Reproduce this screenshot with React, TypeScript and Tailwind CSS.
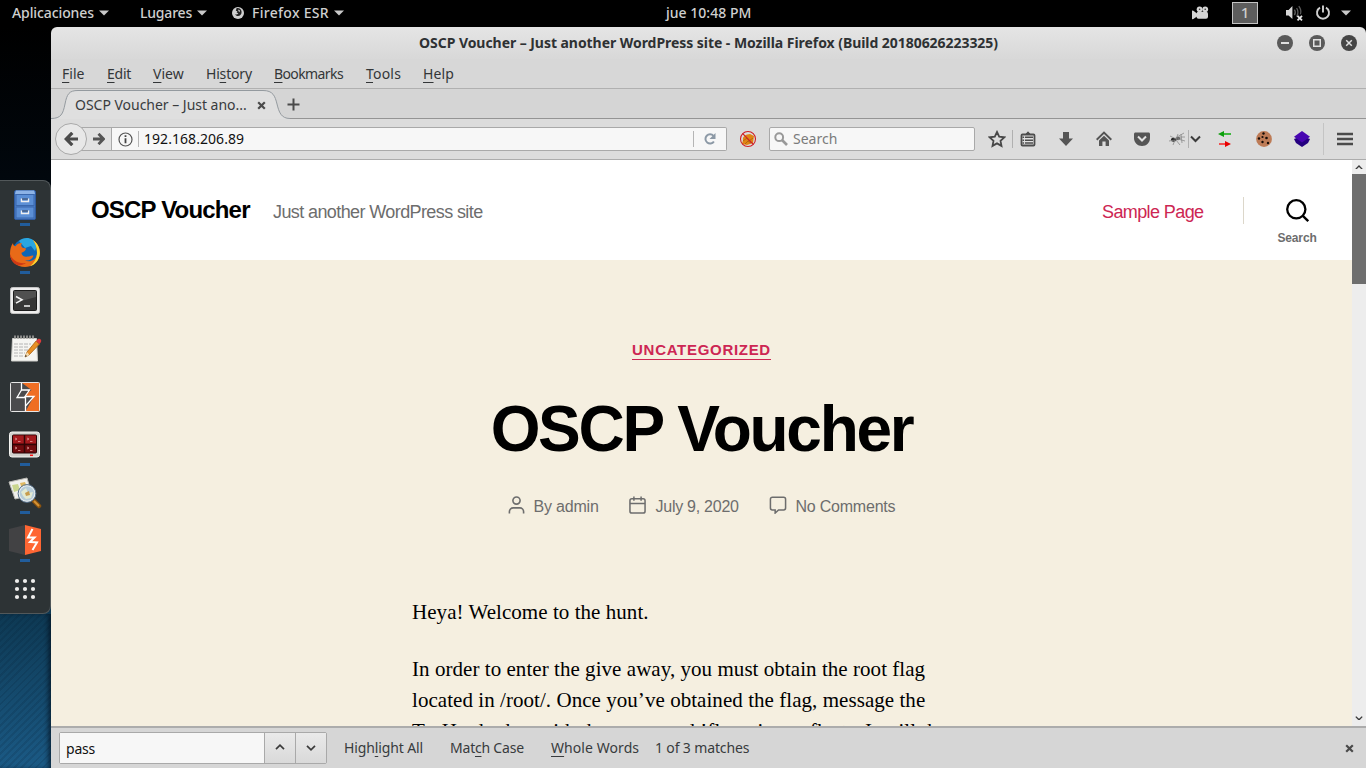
import type { ReactNode } from "react";

const Caret = ({ className = "" }: { className?: string }) => (
  <svg className={`shrink-0 ${className}`} width="10" height="6" viewBox="0 0 10 6"><path d="M0 .5h10L5 5.5z" fill="#c9c9c9" /></svg>
);

function TopBar() {
  return (
    <div className="flex h-[27px] shrink-0 bg-black pb-px text-[14px] font-medium text-[#cfcfcf]">
      <div className="flex w-[128px] items-center pl-3">
        <span className="pb-[2px] tracking-[-0.1px]">Aplicaciones</span><Caret className="ml-[5px]" />
      </div>
      <div className="flex w-[104px] items-center pl-3">
        <span className="pb-[2px] tracking-[-0.2px]">Lugares</span><Caret className="ml-[5px]" />
      </div>
      <div className="flex w-[434px] items-center">
        <svg width="12" height="12" viewBox="0 0 12 12">
          <circle cx="6" cy="6" r="6" fill="#cfcfcf" />
          <path d="M4.500 1.200C7 .6 9.400 2 9.600 4.800 9.800 7.500 8 9 6 9 4.600 9 3.600 8.200 3.200 7.200l1.800.3 1.400-1.200-1.800-.7.8-1.300-1.600-.6z" fill="#222" />
          <path d="M6.200 2.400l1.800 1-.4 1.800L6.400 4z" fill="#cfcfcf" />
        </svg>
        <span className="ml-[8px] pb-[2px] tracking-[0.3px]">Firefox ESR</span><Caret className="ml-[5px]" />
      </div>
      <div className="flex w-[526px] items-center pb-[2px] tracking-[0.02px]">jue 10:48 PM</div>
      <div className="flex flex-1 items-center">
        <svg width="17" height="14" viewBox="0 0 17 14" fill="#d6d6d6">
          <circle cx="7.6" cy="3.3" r="2.9" /><circle cx="13.2" cy="3.3" r="2.9" />
          <rect x="4.500" y="5.8" width="11.500" height="7" rx="2" /><path d="M0 4.6l1.4.2L5 7.6v3L1.4 13 0 13.2z" />
          <circle cx="7.6" cy="3.3" r=".8" fill="#333" /><circle cx="13.2" cy="3.3" r=".8" fill="#333" />
        </svg>
        <div className="ml-[23px] flex h-[22px] w-[26px] items-center justify-center border border-[#c4c4c4] bg-[#5d5d5d] pb-[2px] text-[15px] text-[#cfcfcf]">1</div>
        <svg className="ml-[28px]" width="18" height="16" viewBox="0 0 18 16">
          <path d="M0 5h2.6L6.4 1v13L2.6 10.6H0z" fill="#d6d6d6" />
          <path d="M8.4 4.6c1 1.4 1 4 0 5.6M10.6 3c1.6 2.4 1.6 6 0 8.8M12.8 1.2c2.2 3 2.4 6 1.6 8" stroke="#5a5a5a" strokeWidth="1.3" fill="none" />
          <path d="M11.500 10.900l4.500 4.500M16 10.900l-4.500 4.500" stroke="#e6e6e6" strokeWidth="1.8" />
        </svg>
        <svg className="ml-[11px]" width="16" height="16" viewBox="0 0 16 16" fill="none" stroke="#cfcfcf" strokeWidth="1.9">
          <path d="M5 2.6a6 6 0 1 0 6 0M8 .6v7" />
        </svg>
        <Caret className="ml-[10px]" />
      </div>
    </div>
  );
}

const dock: { icon: ReactNode; on: boolean }[] = [
  { on: true, icon: (
    <>
      <rect x="6.5" y="2.500" width="21" height="29" rx="1.5" fill="#4a7fc9" stroke="#2f5a9e" />
      <path d="M8 2.500h18l1 3.500H7z" fill="#8db3e6" />
      <rect x="8" y="6.5" width="18" height="11" fill="#5b8fd6" stroke="#3a67ac" /><rect x="8" y="19" width="18" height="11" fill="#5b8fd6" stroke="#3a67ac" />
      <path d="M13.500 10.500v3h7v-3M13.500 22.500v3h7v-3" fill="none" stroke="#efefef" strokeWidth="1.4" /><path d="M14 11h6M14 23h6" stroke="#39455a" />
    </>) },
  { on: true, icon: (
    <>
      <circle cx="18" cy="16" r="13.500" fill="#0d66b6" /><path d="M11 5c5-5 15-4 18 4l-2 6-4-5-6 2z" fill="#2aa6e0" />
      <path d="M25 4c5 4 8 9 6.500 16C29.500 27 23.500 31 17 31 8.500 31 2 25 2 17.500 2 13 3 10 5 7c0 2 1 3.200 2.500 3.200C9 8 11 7 14 7c-1.200 1.700-1.200 3.500.8 4.800l3.200.8c0 2-2 3.200-4.500 4.200 0 2.700 3 4.700 6 3.700 3 0 4-1.800 6-.8-1.200 3.500-5 5.500-9 4.500 5 2.800 12.500 0 12.500-7.500C29 11 27.500 7.500 25 4z" fill="#e86a18" />
      <path d="M25 4c5.500 4 8 10 6.300 16.500-1.300 5-5 8.500-9.300 9.800 4.700-4 7-8.300 7-13.600 0-5.200-1.500-9-4-12.700z" fill="#fbd52f" />
      <path d="M2 18c2 6 8 10 16 9-3 2-7 3-9 2-4-2-7-6-7-11z" fill="#cf3a15" />
    </>) },
  { on: false, icon: (
    <>
      <rect x="2.5" y="3.500" width="29" height="26" rx="2" fill="#ededed" stroke="#c4c4c4" />
      <rect x="5.500" y="6.500" width="23" height="20" rx="1" fill="#363636" stroke="#1c1c1c" /><path d="M6 7h22v6L6 19z" fill="#505050" />
      <path d="M8 12.500l6 3.300-6 3.300M16 22h6" fill="none" stroke="#f5f5f5" strokeWidth="1.500" />
    </>) },
  { on: false, icon: (
    <>
      <path d="M4.500 6.500h24l1 22.500h-26z" fill="#f5f5f2" stroke="#cfcfcb" />
      <path d="M7 7V3.500m3 3.500V3.500m3 3.500V3.500m3 3.500V3.500m3 3.500V3.500m3 3.500V3.500m3 3.500V3.500" stroke="#a8a8a4" strokeWidth="1.500" />
      <path d="M6 12h17M6 15h14M6 18h15M6 21h11M6 24h9" stroke="#b4b4b4" strokeWidth="1" strokeDasharray="4 1" />
      <path d="M17 25l2-5L28 9l3.500 3-10.500 11z" fill="#e88f25" stroke="#a75f11" strokeWidth=".8" />
      <path d="M28 9l2-2c2-1 4 1 3 3l-1.500 2z" fill="#dd3b3b" /><path d="M17 25l2-5 2.500 3z" fill="#f4dcb0" /><path d="M17 25l.6-2 1.400 1z" fill="#222" />
    </>) },
  { on: false, icon: (
    <>
      <rect x="2.500" y="2.500" width="29" height="29" fill="#4b4b4d" />
      <path d="M13.500 2.500h18v29h-14l1-7 7-8-8.500-1 3-6-7-.5z" fill="#ef6e23" />
      <path d="M13.500 2.500V9.500l7 .5-11.500 8h9.500L17.500 31.500 26 16H15.500l8-6" fill="#4b4b4d" />
      <path d="M13.500 3v7h8L17 16.500h9L17.500 26v5.500" fill="none" stroke="#fff" strokeWidth="1.300" />
      <path d="M13.500 10L9 17.500h8.500V26" fill="none" stroke="#fff" strokeWidth="1.300" />
      <rect x="2.500" y="2.500" width="29" height="29" rx="1" fill="none" stroke="#e6e6e6" />
    </>) },
  { on: true, icon: (
    <>
      <rect x="1.500" y="4" width="30" height="25" rx="2.500" fill="#d2d2ce" stroke="#f4f4f1" /><rect x="4.500" y="7" width="24" height="18" rx="1" fill="#700b0e" stroke="#280305" />
      <path d="M5 7.500h23v8H5z" fill="#a51a1e" /><path d="M16.500 7v18M5 16.500h23" stroke="#310506" strokeWidth="1.500" />
      <path d="M7 10l2 1-2 1m3 1.500h2.500M19 10l2 1-2 1m3 1.500h2.500M7 19l2 1-2 1m3 1.500h2.500M19 19l2 1-2 1m3 1.500h2.500" stroke="#e59a9a" strokeWidth=".8" fill="none" />
      <path d="M22 27.300h3" stroke="#f11" strokeWidth="1.500" />
    </>) },
  { on: true, icon: (
    <>
      <path d="M1 6l18-4 5 17-17 4z" fill="#f0f0ec" stroke="#b9b9b4" /><path d="M4 9l6-1 2 6-6 2z" fill="#c9d68f" /><path d="M12 7l5-1 2 5-5 2z" fill="#dfb862" />
      <path d="M26 25l5 5" stroke="#8a5310" strokeWidth="4.500" strokeLinecap="round" /><path d="M26 25l5 5" stroke="#d59334" strokeWidth="2" />
      <circle cx="19" cy="17.500" r="8" fill="#b6ccd9" stroke="#e8edf0" strokeWidth="1.500" /><circle cx="19" cy="17.500" r="8.900" fill="none" stroke="#55708a" />
      <path d="M13 16l5-4 2 5 5-1-2 6-5 1-3-3z" fill="#e3ead2" /><path d="M17 17l4-2 1 4-4 1z" fill="#c79c4d" />
    </>) },
  { on: true, icon: (
    <>
      <path d="M1 5l16-4v30L1 27z" fill="#424244" /><path d="M17 1l16 4v22l-16 4z" fill="#ff6633" />
      <path d="M24.500 5l-4.500 8.500h6.500L22 18l7 .5L24.500 26" fill="none" stroke="#fff" strokeWidth="2" />
    </>) },
  { on: false, icon: (
    <g fill="#eeeeec">
      {[9, 17, 25].map((y) => [9, 17, 25].map((x) => <circle key={`${x}-${y}`} cx={x} cy={y} r="2.100" />))}
    </g>) },
];

function Dock() {
  return (
    <aside className="flex w-[51px] shrink-0 flex-col bg-[linear-gradient(180deg,#000_0%,#01070d_20%,#06243a_70%,#0e3a55_80%,#1b5a85_100%)]">
      <div className="mt-[153px] flex h-[434px] w-[51px] flex-col rounded-r-[8px] border border-l-0 border-[#52585a] bg-[#2d3335]">
        {dock.map((d, i) => (
          <div key={i} className="flex h-12 shrink-0 flex-col items-center pt-[7px]">
            <svg width="34" height="34" viewBox="0 0 34 34">{d.icon}</svg>
            {d.on && <div className="mt-px h-[3px] w-[10px] bg-[#215d9c]" />}
          </div>
        ))}
      </div>
      <div className="w-full flex-1 bg-[repeating-linear-gradient(135deg,transparent_0_3px,rgba(0,20,40,0.13)_3px_5px)] shadow-[inset_-4px_0_4px_-1px_rgba(0,10,20,0.55)]" />
    </aside>
  );
}

function TitleBar() {
  return (
    <div className="grid h-8 shrink-0 grid-cols-[1fr_auto_1fr] items-center bg-linear-to-b from-[#e5e5e5] to-[#d8d8d8]">
      <span />
      <span className="pb-[2px] text-[14px] font-bold tracking-[-0.05px] text-[#2e3133]">OSCP Voucher – Just another WordPress site - Mozilla Firefox (Build 20180626223325)</span>
      <div className="flex justify-end gap-4 pr-[9px]">
        <svg width="16" height="16" viewBox="0 0 16 16"><circle cx="8" cy="8" r="8" fill="#5a5a5a" /><path d="M4 8h8" stroke="#e0e0e0" strokeWidth="2" /></svg>
        <svg width="16" height="16" viewBox="0 0 16 16"><circle cx="8" cy="8" r="8" fill="#5a5a5a" /><rect x="4.750" y="4.750" width="6.500" height="6.500" fill="none" stroke="#e0e0e0" strokeWidth="1.500" /></svg>
        <svg width="16" height="16" viewBox="0 0 16 16"><circle cx="8" cy="8" r="8" fill="#464646" /><path d="M5.200 5.200l5.600 5.600M10.800 5.200l-5.600 5.600" stroke="#e0e0e0" strokeWidth="1.500" /></svg>
      </div>
    </div>
  );
}

const U = ({ children }: { children: ReactNode }) => <span className="underline underline-offset-[3px]">{children}</span>;

function MenuBar() {
  return (
    <div className="flex h-[30px] shrink-0 items-center border-b border-[#b0b0b0] bg-[#d7d7d7] pl-[11px] text-[14px] text-[#333638]">
      <span className="w-[45px]"><U>F</U>ile</span>
      <span className="w-[46px] tracking-[-0.25px]"><U>E</U>dit</span>
      <span className="w-[53px]"><U>V</U>iew</span>
      <span className="w-[68px] tracking-[-0.19px]">Hi<U>s</U>tory</span>
      <span className="w-[92px] tracking-[-0.6px]"><U>B</U>ookmarks</span>
      <span className="w-[57px] tracking-[0.2px]"><U>T</U>ools</span>
      <span className="tracking-[0.15px]"><U>H</U>elp</span>
    </div>
  );
}

const Cross = () => <svg width="9" height="9" viewBox="0 0 9 9"><path d="M1.200 1.200l6.600 6.600M7.800 1.200L1.200 7.800" stroke="#4a4a4a" strokeWidth="2.200" /></svg>;

function TabStrip() {
  return (
    <div className="flex h-[30px] shrink-0 bg-[#d5d5d5]">
      <div className="grid w-[239px] shrink-0">
        <svg className="col-start-1 row-start-1" width="239" height="30" viewBox="0 0 239 30">
          <path d="M0 29.500C10 29.500 12 25 14 15S18 1.500 27 1.500H212C222 1.500 224 7 226 15S230 29.500 239 29.500V30H0z" fill="#dfdfdf" />
          <path d="M0 29.500C10 29.500 12 25 14 15S18 1.500 27 1.500H212C222 1.500 224 7 226 15S230 29.500 239 29.500" fill="none" stroke="#949a9f" />
        </svg>
        <div className="col-start-1 row-start-1 flex items-center pt-[2px] pl-6 text-[14px] text-[#383b3d]">
          <span className="w-[182px] pb-[2px] tracking-[-0.02px]">OSCP Voucher – Just ano...</span><Cross />
        </div>
      </div>
      <div className="flex-1 border-b border-[#949494] pt-[9px]">
        <svg className="-ml-[3px]" width="13" height="13" viewBox="0 0 13 13"><path d="M6.500.5v12M.5 6.500h12" stroke="#4a4a4a" strokeWidth="2" /></svg>
      </div>
    </div>
  );
}

function NavBar() {
  return (
    <div className="flex h-[41px] shrink-0 items-center border-b border-[#acacac] bg-[#dcdcdc] text-[14px]">
      <div className="z-10 ml-[4px] flex size-[32px] shrink-0 items-center justify-center rounded-full border border-[#a9a9a9] bg-[#e8e8e8]">
        <svg width="15" height="14" viewBox="0 0 15 14"><path d="M8.300.8L2.200 7l6.100 6.200M2.500 7H14" fill="none" stroke="#4b4b4b" strokeWidth="3.200" /></svg>
      </div>
      <div className="-ml-3 flex h-6 w-[37px] shrink-0 items-center border-y border-r border-[#a9a9a9] bg-[#e2e2e2] pl-[18px]">
        <svg width="12" height="12" viewBox="0 0 12 12"><path d="M5.500.8L10.500 6l-5 5.200M0 6h10" fill="none" stroke="#555" strokeWidth="2.800" /></svg>
      </div>
      <div className="flex h-6 w-[615px] shrink-0 items-center rounded-r-[2px] border border-l-0 border-[#a9a9a9] bg-[#f7f7f7]">
        <svg className="ml-[6px]" width="15" height="15" viewBox="0 0 15 15"><circle cx="7.500" cy="7.500" r="6.500" fill="none" stroke="#555" strokeWidth="1.200" /><path d="M7.500 6.300v5M7.500 3.200v1.900" stroke="#444" strokeWidth="1.800" /></svg>
        <div className="ml-[5px] h-4 w-px bg-[#b5b5b5]" />
        <span className="ml-[5px] flex-1 pb-[2px] tracking-[0.05px] text-[#111]">192.168.206.89</span>
        <div className="h-4 w-px bg-[#b5b5b5]" />
        <svg className="mr-[10px] ml-[10px]" width="12" height="12" viewBox="0 0 12 12"><path d="M9.500 2.900A4.600 4.600 0 1 0 9.900 8.500" fill="none" stroke="#8c99a6" strokeWidth="2" /><path d="M11.500 0v6h-6z" fill="#8c99a6" /></svg>
      </div>
      <svg className="ml-[12px] shrink-0" width="18" height="18" viewBox="0 0 18 18">
        <path d="M4 10c-1-3 3-6 7-6l4 2-1 7-6 2-5-1z" fill="#e08414" /><path d="M4 11l4-3 2 3 4-3M6 14l3-3 3 2" stroke="#a85c0c" strokeWidth=".8" fill="none" /><circle cx="9" cy="9" r="7.500" fill="none" stroke="#cf1f26" strokeWidth="1.100" /><path d="M3.700 3.700l10.600 10.600" stroke="#cf1f26" strokeWidth="1.200" />
      </svg>
      <div className="ml-[12px] flex h-6 w-[206px] shrink-0 items-center rounded-[2px] border border-[#a9a9a9] bg-[#f7f7f7] text-[#7b7b7b]">
        <svg className="ml-[4px]" width="14" height="14" viewBox="0 0 14 14"><circle cx="5.200" cy="5.200" r="3.900" fill="none" stroke="#999" strokeWidth="2" /><path d="M8 8l5 5" stroke="#999" strokeWidth="2.600" /></svg>
        <span className="ml-[5px] pb-[2px]">Search</span>
      </div>
      <svg className="ml-[13px]" width="18" height="18" viewBox="0 0 18 18"><path d="M9 2l2.200 4.700 5.100.6-3.800 3.500 1 5.100L9 13.400l-4.500 2.500 1-5.100L1.700 7.300l5.100-.6z" fill="none" stroke="#484848" strokeWidth="1.800" /></svg>
      <div className="ml-[6px] h-[18px] w-px bg-[#b0b0b0]" />
      <svg className="ml-[7px]" width="16" height="16" viewBox="0 0 16 16"><path d="M2.500 3.500h11q1 0 1 1v9q0 1-1 1h-11q-1 0-1-1v-9q0-1 1-1z" fill="#e2e2e2" stroke="#4d4d4d" strokeWidth="1.800" /><path d="M5.500 3.500L8 .8l2.500 2.700z" fill="#4d4d4d" stroke="#4d4d4d" /><path d="M5 6.300h8M5 9.200h8M5 12h8M2.500 6.300h1.600M2.500 9.200h1.600M2.500 12h1.600" stroke="#4d4d4d" strokeWidth="1.500" /></svg>
      <svg className="ml-[22px]" width="16" height="16" viewBox="0 0 16 16"><path d="M5 1h6v6.500h4L8 15 1 7.500h4z" fill="#555" /></svg>
      <svg className="ml-[22px]" width="16" height="16" viewBox="0 0 16 16"><path d="M.7 8.700L8 1.600l7.300 7.100" fill="none" stroke="#555" strokeWidth="2" /><path d="M8 4.800l5 4.700V15H9.600v-4.500H6.400V15H3V9.500z" fill="#555" /></svg>
      <svg className="ml-[22px]" width="16" height="16" viewBox="0 0 16 16"><path d="M1.500 1.500h13c.8 0 1.500.6 1.500 1.500v4c0 4.500-3.500 8-8 8S0 11.500 0 7V3c0-.9.7-1.500 1.500-1.500z" fill="#555" /><path d="M4 5.500l4 4 4-4" stroke="#e2e2e2" strokeWidth="2" fill="none" /></svg>
      <svg className="ml-[19px]" width="17" height="14" viewBox="0 0 17 14"><ellipse cx="4.500" cy="7.800" rx="2.600" ry="2" fill="#222" /><ellipse cx="9" cy="6.500" rx="2.600" ry="1.800" fill="#666" /><path d="M1 4l6 3 2-5M0 9l6-1-2 5M7 8l4 5M9 7l7 2M8 5l7-4M10 5h6M12 2l1 9" stroke="#8a8a8a" strokeWidth=".8" fill="none" /></svg>
      <div className="ml-[2px] h-[18px] w-px bg-[#b0b0b0]" />
      <svg className="ml-[1px]" width="11" height="8" viewBox="0 0 11 8"><path d="M1 1.500l4.500 4.500L10 1.500" fill="none" stroke="#3c3c3c" strokeWidth="2" /></svg>
      <svg className="ml-[17px]" width="14" height="16" viewBox="0 0 14 16"><path d="M4 3h9" stroke="#3fb83f" strokeWidth="2" /><path d="M6 0v6L0 3z" fill="#0b9e0b" /><path d="M1 13h9" stroke="#f05050" strokeWidth="2" /><path d="M7 10v6l6-3z" fill="#e80000" /></svg>
      <svg className="ml-[24px]" width="16" height="16" viewBox="0 0 16 16"><circle cx="8" cy="8" r="7.900" fill="#bd7b56" /><g fill="#160c07"><circle cx="7.500" cy="2.500" r="1.200" /><circle cx="3" cy="7.500" r="1.200" /><circle cx="6.500" cy="6" r="1.100" /><circle cx="10.500" cy="7" r="1.300" /><circle cx="6.500" cy="11" r="1.200" /><circle cx="12" cy="12" r="1.200" /></g></svg>
      <svg className="ml-[22px]" width="16" height="16" viewBox="0 0 16 16"><path d="M0 8l8-3 8 3-2 4-6 4-6-4z" fill="#250080" /><path d="M8 0l8 5.800-8 5.800-8-5.800z" fill="#4805b1" /></svg>
      <div className="ml-[13px] h-[32px] w-px bg-[#c4c4c4]" />
      <svg className="ml-[13px]" width="16" height="14" viewBox="0 0 16 14"><path d="M0 2h16M0 7h16M0 12h16" stroke="#4b4b4b" strokeWidth="2.600" /></svg>
    </div>
  );
}

const metaIcon = "mb-[3px] ml-px shrink-0 text-[#6d6d6d]";

function Page() {
  return (
    <div className="flex min-w-0 flex-1 flex-col overflow-hidden bg-[#f5efe0] font-['Liberation_Sans',Arial,sans-serif]">
      <header className="flex h-[100px] shrink-0 items-center bg-white pl-10">
        <span className="w-[182px] text-[24px] leading-6 font-bold tracking-[-0.82px] text-black">OSCP Voucher</span>
        <span className="mt-1 flex-1 text-[18px] leading-5 tracking-[-0.6px] text-[#6d6d6d]">Just another WordPress site</span>
        <span className="mt-1 w-[141px] text-[18px] leading-5 tracking-[-0.6px] text-[#cd2653]">Sample Page</span>
        <div className="h-[27px] w-px bg-[#dcd7ca]" />
        <div className="mt-[25px] flex w-[108px] flex-col items-center pr-[2px]">
          <svg width="23" height="23" viewBox="0 0 23 23" fill="none" stroke="#000" strokeWidth="2.300"><circle cx="10.300" cy="10.300" r="9.100" /><path d="M16.600 16.600l5.600 5.600" /></svg>
          <span className="mt-[8px] text-[12px] leading-4 font-bold tracking-[-0.13px] text-[#6d6d6d]">Search</span>
        </div>
      </header>
      <article className="flex flex-1 flex-col items-center">
        <div className="mt-[80px] h-5 border-b border-[#cd2653] text-[15px] leading-5 font-bold tracking-[0.7px] text-[#cd2653]">UNCATEGORIZED</div>
        <h1 className="mt-[34px] text-[64px] leading-[71px] font-bold tracking-[-2.3px] text-black">OSCP Voucher</h1>
        <div className="mt-[31px] flex h-5 w-[390px] shrink-0 items-center text-[16px] text-[#6d6d6d]">
          <svg className={metaIcon} width="17" height="18" viewBox="0 0 17 19" fill="none" stroke="currentColor" strokeWidth="1.700"><circle cx="8.500" cy="4.800" r="3.800" /><path d="M1 18.500v-2a4 4 0 0 1 4-4h7a4 4 0 0 1 4 4v2" /></svg>
          <span className="mt-[2px] ml-[9px] w-[94px] tracking-[-0.2px]">By admin</span>
          <svg className={metaIcon} width="17" height="18" viewBox="0 0 18 19" fill="none" stroke="currentColor" strokeWidth="1.600"><rect x="1" y="3" width="16" height="15" rx="2" /><path d="M1 8h16M5.200.5v4.500M12.800.5v4.500" /></svg>
          <span className="mt-[2px] ml-[10px] w-[112px] tracking-[-0.26px]">July 9, 2020</span>
          <svg className={metaIcon} width="18" height="18" viewBox="0 0 18 19" fill="none" stroke="currentColor" strokeWidth="1.600"><path d="M3 1.300h12a2 2 0 0 1 2 2v9.400a2 2 0 0 1-2 2H9.600L6 18v-3.300H3a2 2 0 0 1-2-2V3.300a2 2 0 0 1 2-2z" /></svg>
          <span className="mt-[2px] ml-[9px] tracking-[-0.22px] whitespace-nowrap">No Comments</span>
        </div>
        <div className="mt-[81px] w-[579px] font-['Liberation_Serif','Times_New_Roman',serif] text-[21px] leading-[31px] tracking-[0.05px] whitespace-nowrap text-black">
          <p>Heya! Welcome to the hunt.</p>
          <p className="mt-[26px]">
            In order to enter the give away, you must obtain the root flag<br />
            located in /root/. Once you’ve obtained the flag, message the<br />
            TryHarder bot with the command !flag &lt;insert flag&gt;. It will then
          </p>
        </div>
      </article>
    </div>
  );
}

const Chevron = ({ up = false, size = 10 }: { up?: boolean; size?: number }) => (
  <svg width={size} height={size * 0.6} viewBox="0 0 10 6"><path d={up ? "M1 5.200L5 1.200l4 4" : "M1 .8l4 4 4-4"} fill="none" stroke="#3b3b3b" strokeWidth="1.700" /></svg>
);

function ScrollBar() {
  return (
    <div className="flex w-[14px] shrink-0 flex-col bg-[#ededed]">
      <div className="flex h-[14px] items-center justify-center"><Chevron up size={8} /></div>
      <div className="h-[110px] bg-[#6e6e6e]" />
      <div className="flex-1" />
      <div className="flex h-4 items-center justify-center"><Chevron size={8} /></div>
    </div>
  );
}

function FindBar() {
  return (
    <div className="flex h-[42px] shrink-0 items-center border-t-2 border-[#acacac] bg-[#d6d6d6] pl-2 text-[14px] text-[#383b3d]">
      <div className="flex h-8 w-[268px] rounded-[2px] border border-[#a9a9a9]">
        <div className="flex w-[204px] items-center bg-[#f7f7f7] pl-[6px] tracking-[-0.2px] text-[#111]">pass</div>
        <div className="flex flex-1 items-center justify-center border-l border-[#a9a9a9] bg-linear-to-b from-[#eaeaea] to-[#d9d9d9] pb-[2px]"><Chevron up /></div>
        <div className="flex flex-1 items-center justify-center border-l border-[#a9a9a9] bg-linear-to-b from-[#eaeaea] to-[#d9d9d9] pb-px"><Chevron /></div>
      </div>
      <span className="ml-[17px] w-[106px] pb-px tracking-[-0.13px]">High<U>l</U>ight All</span>
      <span className="w-[101px] pb-px tracking-[-0.21px]">Mat<U>c</U>h Case</span>
      <span className="w-[104px] pb-px tracking-[0.07px]"><U>W</U>hole Words</span>
      <span className="flex-1 pb-px tracking-[-0.14px]">1 of 3 matches</span>
      <div className="mr-[12px]"><Cross /></div>
    </div>
  );
}

export default function App() {
  return (
    <div className="flex h-[768px] w-[1366px] flex-col overflow-hidden bg-black font-['Noto_Sans',sans-serif]">
      <TopBar />
      <div className="flex min-h-0 flex-1">
        <Dock />
        <div className="flex min-w-0 flex-1 flex-col overflow-hidden rounded-t-[6px]">
          <TitleBar />
          <MenuBar />
          <TabStrip />
          <NavBar />
          <div className="flex min-h-0 flex-1">
            <Page />
            <ScrollBar />
          </div>
          <FindBar />
        </div>
      </div>
    </div>
  );
}
